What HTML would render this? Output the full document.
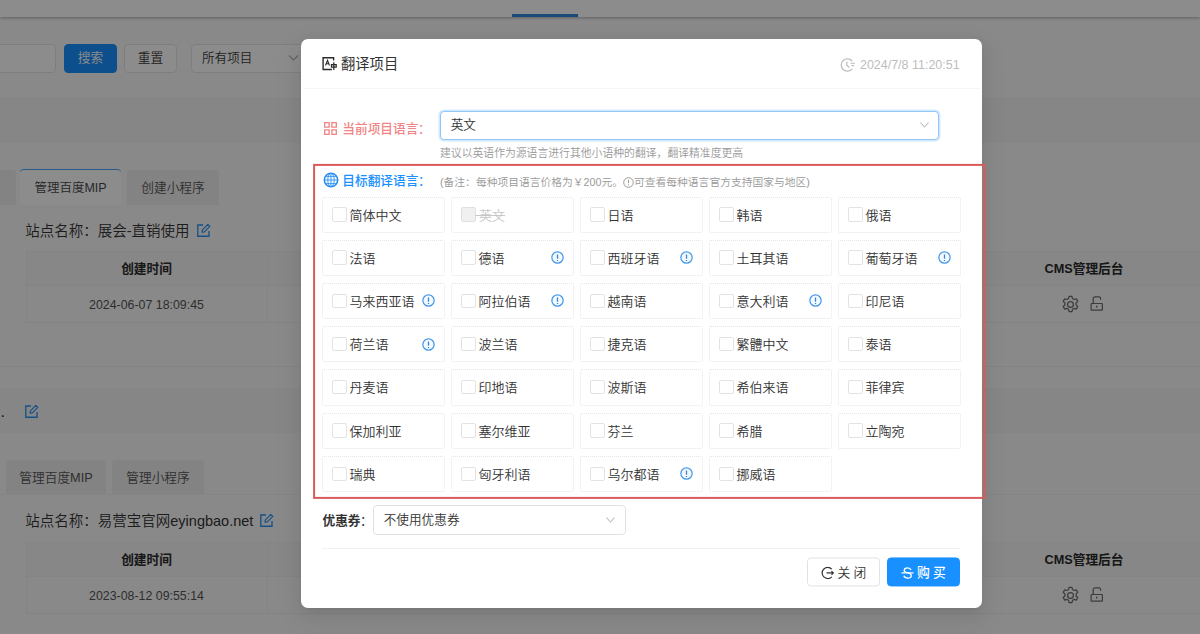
<!DOCTYPE html>
<html lang="zh-CN">
<head>
<meta charset="utf-8">
<title>翻译项目</title>
<style>
*{box-sizing:border-box;margin:0;padding:0}
html,body{width:1200px;height:634px;overflow:hidden}
body{position:relative;background:#fff;font-family:"Liberation Sans","Noto Sans CJK SC",sans-serif;font-size:13px;color:#333;line-height:1;font-weight:350}
.abs{position:absolute}
svg{display:block}
/* ---------- background page ---------- */
#page{position:absolute;z-index:0;left:0;top:0;width:1200px;height:634px;background:#fafafa;overflow:hidden}
.topbar{left:0;top:0;width:1200px;height:17px;background:#fff;box-shadow:0 1px 3px rgba(0,0,0,.3);z-index:2}
.topbar i{position:absolute;left:511.7px;top:14.300px;width:66.3px;height:2.900px;background:#3184dc}
.band{left:0;width:1200px;background:#f5f5f5}
.hline{left:0;width:1200px;height:1px;background:#efefef}
.inp{height:29px;border:1px solid #e6e6e6;border-radius:4px;background:#fff}
.btn{height:29px;border-radius:4px;border:1px solid #e6e6e6;background:#fff;text-align:center;line-height:27px;font-size:12.7px;color:#3a3a3a}
.btn.pri{background:#1890ff;border-color:#1890ff;color:#fff}
.tab{height:35px;border-radius:4px 4px 0 0;background:#eeeeee;text-align:center;line-height:37px;font-size:12.7px;color:#555}
.tab.on{background:#fff;border-top:1px solid #4aa3f5;line-height:36px;color:#484848;font-size:12.5px}
.site{font-size:14.5px;color:#333;white-space:nowrap;line-height:20px}
.th{height:35px;background:#f6f6f6;border-top:1px solid #f0f0f0;border-bottom:1px solid #f0f0f0}
.thc{font-weight:bold;font-size:12.7px;color:#2a2a2a;text-align:center;line-height:37px;white-space:nowrap}
.td{font-size:12.36px;color:#555;text-align:center;line-height:37px;white-space:nowrap}
.vline{width:1px;background:#f0f0f0}
#mask{position:absolute;left:0;top:0;width:1200px;height:634px;background:rgba(0,0,0,.45)}
/* ---------- modal ---------- */
#modal{position:absolute;left:301px;top:39px;width:681px;height:569px;background:#fff;border-radius:7px;box-shadow:0 3px 6px -4px rgba(0,0,0,.12),0 6px 16px 0 rgba(0,0,0,.08),0 9px 28px 8px rgba(0,0,0,.03)}
#redbox{pointer-events:none}
.title{left:40px;top:16.3px;font-size:14.3px;line-height:18px;color:#333;font-weight:400;white-space:nowrap}
.time{right:22.4px;top:19px;font-size:12.47px;line-height:14px;color:#bdbdbd;white-space:nowrap}
.mline{height:1px;background:#f0f0f0}
.lab{font-size:12.7px;line-height:16px;white-space:nowrap;font-weight:500}
.lab i{font-style:normal;margin-left:-0.5px;font-weight:400}
.hint{font-size:10.83px;line-height:14px;color:#999;white-space:nowrap}
.sel{border:1px solid #e2e2e2;border-radius:4px;background:#fff;font-size:12.65px;line-height:28px;padding-left:9.7px;color:#333;white-space:nowrap}
.sel.focus{border-color:#93c6f8;box-shadow:0 0 0 1.5px rgba(24,144,255,.2);line-height:27px}
.cell{position:absolute;width:122.3px;height:36.3px;border:1px dotted #e6e6e6;border-radius:2px}
.cell b{position:absolute;left:9px;top:9.5px;width:14.6px;height:14.6px;border:1px solid #e3e3e3;border-radius:2px;background:#fff}
.cell span{position:absolute;left:26px;top:9px;font-size:13px;line-height:17px;color:#333;white-space:nowrap}
.cell svg{position:absolute;right:9px;top:10.4px}
.cell.dis b{background:#f0f0f0;border-color:#e0e0e0}
.cell.dis span{color:#c8c8c8;text-decoration:line-through}
.mbtn{height:29px;transform:translateY(.45px);border:1px solid #e2e2e2;border-radius:4px;background:#fff;font-size:13px;color:#333}
.mbtn span{position:absolute;top:6.700px;font-size:12.8px;line-height:16px;letter-spacing:3.3px;white-space:nowrap}
.mbtn.pri{background:#1890ff;border-color:#1890ff;color:#fff}
.mbtn.pri span{font-weight:500}
</style>
</head>
<body>
<div id="page">
  <div class="abs topbar"><i></i></div>
  <!-- search row -->
  <div class="abs inp" style="left:-40px;top:44px;width:96px"></div>
  <div class="abs btn pri" style="left:64px;top:44px;width:53px">搜索</div>
  <div class="abs btn" style="left:124px;top:44px;width:53px">重置</div>
  <div class="abs inp" style="left:191px;top:44px;width:130px;line-height:27px;padding-left:10px;font-size:12.6px;color:#404040">所有项目
    <svg class="abs" style="left:95.500px;top:8.200px" width="11" height="10" viewBox="0 0 11 10"><path d="M1 2.5 L5.5 7 L10 2.5" fill="none" stroke="#b5b5b5" stroke-width="1.1"/></svg>
  </div>
  <div class="abs hline" style="top:98px"></div>
  <div class="abs band" style="top:99px;height:44px"></div>
  <!-- block 1 -->
  <div class="abs tab" style="left:-60px;top:170px;width:76px"></div>
  <div class="abs tab on" style="left:20px;top:169px;width:101px;height:36px">管理百度MIP</div>
  <div class="abs tab" style="left:127px;top:170px;width:92px">创建小程序</div>
  <div class="abs site" style="left:25.300px;top:221px">站点名称：展会-直销使用</div>
  <svg class="abs" style="left:196px;top:223px" width="15" height="15" viewBox="0 0 15 15"><path d="M13 8 V13.2 H1.8 V2 H7" fill="none" stroke="#2a93f7" stroke-width="1.35"/><path d="M6 9.2 L6.4 6.8 L11.8 1.4 L13.8 3.4 L8.4 8.8 Z" fill="none" stroke="#2a93f7" stroke-width="1.2" stroke-linejoin="round"/></svg>
  <div class="abs th" style="left:26px;top:251px;width:1180px"></div>
  <div class="abs thc" style="left:26px;top:251px;width:241px">创建时间</div>
  <div class="abs thc" style="left:984px;top:251px;width:200px">CMS管理后台</div>
  <div class="abs td" style="left:26px;top:287px;width:241px">2024-06-07 18:09:45</div>
  <div class="abs hline" style="left:26px;top:322px;width:1180px"></div>
  <div class="abs vline" style="left:26px;top:251px;height:72px"></div>
  <div class="abs vline" style="left:267px;top:251px;height:72px"></div>
  <svg class="abs gear" style="left:1060.900px;top:294.600px" width="19" height="19" viewBox="0 0 17 17"><g fill="none" stroke="#6c6c6c" stroke-width="1.1"><circle cx="8.5" cy="8.5" r="2.6"/><path d="M7.2 1.2h2.6l.5 2 1.4.8 2-.6 1.3 2.3-1.5 1.4v1.8l1.5 1.4-1.3 2.3-2-.6-1.4.8-.5 2H7.200l-.5-2-1.400-.8-2 .6-1.300-2.300 1.500-1.400V7.100L2 5.700l1.300-2.300 2 .6 1.400-.8z" stroke-linejoin="round"/></g></svg>
  <svg class="abs" style="left:1089px;top:295px" width="15" height="17" viewBox="0 0 15 17"><g fill="none" stroke="#6c6c6c" stroke-width="1.2"><rect x="2.100" y="8.500" width="11.300" height="6.600" rx=".7"/><path d="M4.200 8.500V3.600a1.700 1.700 0 0 1 1.700-1.700h4a1.700 1.700 0 0 1 1.700 1.700V4.700"/><path d="M7.700 10.800v1.800" stroke-width="1.400"/></g></svg>
  <div class="abs hline" style="top:366px"></div>
  <div class="abs band" style="top:388px;height:45px"></div>
  <div class="abs" style="left:.5px;top:401.500px;font-size:16px;line-height:20px;color:#333">.</div>
  <svg class="abs" style="left:24.300px;top:404px" width="15" height="15" viewBox="0 0 15 15"><path d="M13 8 V13.2 H1.8 V2 H7" fill="none" stroke="#2a93f7" stroke-width="1.35"/><path d="M6 9.2 L6.4 6.8 L11.8 1.4 L13.8 3.4 L8.4 8.8 Z" fill="none" stroke="#2a93f7" stroke-width="1.2" stroke-linejoin="round"/></svg>
  <!-- block 2 -->
  <div class="abs tab" style="left:-80px;top:460px;width:80px"></div>
  <div class="abs tab" style="left:6px;top:460px;width:100px">管理百度MIP</div>
  <div class="abs tab" style="left:112px;top:460px;width:92px">管理小程序</div>
  <div class="abs hline" style="top:494px;background:#f3f3f3"></div>
  <div class="abs site" style="left:25.300px;top:511px">站点名称：易营宝官网eyingbao.net</div>
  <svg class="abs" style="left:259px;top:513px" width="15" height="15" viewBox="0 0 15 15"><path d="M13 8 V13.2 H1.8 V2 H7" fill="none" stroke="#2a93f7" stroke-width="1.35"/><path d="M6 9.2 L6.4 6.8 L11.8 1.4 L13.8 3.4 L8.4 8.8 Z" fill="none" stroke="#2a93f7" stroke-width="1.2" stroke-linejoin="round"/></svg>
  <div class="abs th" style="left:26px;top:542px;width:1180px"></div>
  <div class="abs thc" style="left:26px;top:542px;width:241px">创建时间</div>
  <div class="abs thc" style="left:984px;top:542px;width:200px">CMS管理后台</div>
  <div class="abs td" style="left:26px;top:578px;width:241px">2023-08-12 09:55:14</div>
  <div class="abs hline" style="left:26px;top:613px;width:1180px"></div>
  <div class="abs vline" style="left:26px;top:542px;height:72px"></div>
  <div class="abs vline" style="left:267px;top:542px;height:72px"></div>
  <svg class="abs gear" style="left:1060.900px;top:585.600px" width="19" height="19" viewBox="0 0 17 17"><g fill="none" stroke="#6c6c6c" stroke-width="1.1"><circle cx="8.5" cy="8.5" r="2.6"/><path d="M7.2 1.2h2.6l.5 2 1.4.8 2-.6 1.3 2.3-1.5 1.4v1.8l1.5 1.4-1.3 2.3-2-.6-1.4.8-.5 2H7.200l-.5-2-1.400-.8-2 .6-1.300-2.300 1.500-1.400V7.100L2 5.700l1.300-2.300 2 .6 1.400-.8z" stroke-linejoin="round"/></g></svg>
  <svg class="abs" style="left:1089px;top:586px" width="15" height="17" viewBox="0 0 15 17"><g fill="none" stroke="#6c6c6c" stroke-width="1.2"><rect x="2.100" y="8.500" width="11.300" height="6.600" rx=".7"/><path d="M4.200 8.500V3.600a1.700 1.700 0 0 1 1.700-1.700h4a1.700 1.700 0 0 1 1.700 1.700V4.700"/><path d="M7.700 10.800v1.800" stroke-width="1.400"/></g></svg>
</div>
<div id="mask"></div>
<div id="modal">
  <svg class="abs" style="left:21px;top:17px" width="17" height="16" viewBox="0 0 17 16"><path d="M11.600 4.500V1.800H1.100V13.500H9.900" fill="none" stroke="#2b2b2b" stroke-width="1.400"/><path d="M3.500 9.500 5.500 4.200 7.500 9.500M4.300 7.700h2.400" fill="none" stroke="#2b2b2b" stroke-width="1.100"/><path d="M9.500 8.700h4.700v2.500H9.500zM11.800 6.200v7.900" fill="none" stroke="#2b2b2b" stroke-width="1.250"/></svg>
  <div class="abs title">翻译项目</div>
  <div class="abs time">2024/7/8 11:20:51</div>
  <svg class="abs" style="left:539.400px;top:18.700px" width="16" height="14" viewBox="0 0 16 14"><path d="M12.300 3.200A6.200 6.200 0 1 0 12.300 10.800" fill="none" stroke="#bdbdbd" stroke-width="1.200"/><path d="M6.800 3.500V7.300L9.300 9.500" fill="none" stroke="#bdbdbd" stroke-width="1.200"/><path d="M10.500 5.300H15M11.500 7.600H14" fill="none" stroke="#bdbdbd" stroke-width="1.100"/></svg>
  <div class="abs mline" style="left:3px;top:49px;width:676px;background:#f5f5f5"></div>
  <svg class="abs" style="left:23px;top:83px" width="13" height="13" viewBox="0 0 13 13"><path d="M.700.700h4.400v4.400H.700zM7.900.700h4.400v4.400H7.900zM.700 7.900h4.400v4.400H.700zM7.900 7.900h4.400v4.400H7.900z" fill="none" stroke="#f18484" stroke-width="1.300"/></svg>
  <div class="abs lab" style="left:41.3px;top:82px;color:#f18484">当前项目语言<i>：</i></div>
  <div class="abs sel focus" style="left:139px;top:72px;width:499px;height:28.500px">英文
    <svg class="abs" style="left:478px;top:8px" width="11" height="10" viewBox="0 0 11 10"><path d="M1.400 2.500 5.500 7 9.600 2.500" fill="none" stroke="#bdbdbd" stroke-width="1.100"/></svg>
  </div>
  <div class="abs hint" style="left:139px;top:107px">建议以英语作为源语言进行其他小语种的翻译，翻译精准度更高</div>
  <svg class="abs" style="left:21.500px;top:132.500px" width="16" height="16" viewBox="0 0 16 16"><g fill="none" stroke="#2a8ff0"><circle cx="8" cy="8" r="6.700" stroke-width="1.550" fill="#f2faff"/><ellipse cx="8" cy="8" rx="3.200" ry="6.700" stroke-width=".850"/><path d="M8 1.300v13.400M1.300 8h13.400M2.400 4.400h11.200M2.400 11.600h11.200" stroke-width=".850"/></g></svg>
  <div class="abs lab" style="left:41.3px;top:134px;color:#1890ff">目标翻译语言<i>：</i></div>
  <div class="abs hint" style="left:139px;top:135.600px;font-size:10.77px">(备注：每种项目语言价格为￥200元。<svg style="display:inline-block;vertical-align:-2px" width="11" height="11" viewBox="0 0 11 11"><g fill="none" stroke="#999" stroke-width="1"><circle cx="5.500" cy="5.500" r="4.800"/><path d="M5.500 2.800v3.400M5.500 7.400v1"/></g></svg>可查看每种语言官方支持国家与地区)</div>
  <div class="cell" style="left:21.4px;top:157.6px"><b></b><span>简体中文</span></div>
  <div class="cell dis" style="left:150.4px;top:157.6px"><b></b><span style="left:23px">&nbsp;英文</span></div>
  <div class="cell" style="left:279.4px;top:157.6px"><b></b><span>日语</span></div>
  <div class="cell" style="left:408.4px;top:157.6px"><b></b><span>韩语</span></div>
  <div class="cell" style="left:537.4px;top:157.6px"><b></b><span>俄语</span></div>
  <div class="cell" style="left:21.4px;top:200.8px"><b></b><span>法语</span></div>
  <div class="cell" style="left:150.4px;top:200.8px"><b></b><span>德语</span><svg width="13" height="13" viewBox="0 0 13 13"><g fill="none" stroke="#4698ea" stroke-width="1.250"><circle cx="6.500" cy="6.500" r="5.650" fill="#f4fbff"/><path d="M6.500 3.400v4.300M6.500 8.900v1.200" stroke="#3c82cf" stroke-width="1.300"/></g></svg></div>
  <div class="cell" style="left:279.4px;top:200.8px"><b></b><span>西班牙语</span><svg width="13" height="13" viewBox="0 0 13 13"><g fill="none" stroke="#4698ea" stroke-width="1.250"><circle cx="6.500" cy="6.500" r="5.650" fill="#f4fbff"/><path d="M6.500 3.400v4.300M6.500 8.900v1.200" stroke="#3c82cf" stroke-width="1.300"/></g></svg></div>
  <div class="cell" style="left:408.4px;top:200.8px"><b></b><span>土耳其语</span></div>
  <div class="cell" style="left:537.4px;top:200.8px"><b></b><span>葡萄牙语</span><svg width="13" height="13" viewBox="0 0 13 13"><g fill="none" stroke="#4698ea" stroke-width="1.250"><circle cx="6.500" cy="6.500" r="5.650" fill="#f4fbff"/><path d="M6.500 3.400v4.300M6.500 8.900v1.200" stroke="#3c82cf" stroke-width="1.300"/></g></svg></div>
  <div class="cell" style="left:21.4px;top:244.0px"><b></b><span>马来西亚语</span><svg width="13" height="13" viewBox="0 0 13 13"><g fill="none" stroke="#4698ea" stroke-width="1.250"><circle cx="6.500" cy="6.500" r="5.650" fill="#f4fbff"/><path d="M6.500 3.400v4.300M6.500 8.900v1.200" stroke="#3c82cf" stroke-width="1.300"/></g></svg></div>
  <div class="cell" style="left:150.4px;top:244.0px"><b></b><span>阿拉伯语</span><svg width="13" height="13" viewBox="0 0 13 13"><g fill="none" stroke="#4698ea" stroke-width="1.250"><circle cx="6.500" cy="6.500" r="5.650" fill="#f4fbff"/><path d="M6.500 3.400v4.300M6.500 8.900v1.200" stroke="#3c82cf" stroke-width="1.300"/></g></svg></div>
  <div class="cell" style="left:279.4px;top:244.0px"><b></b><span>越南语</span></div>
  <div class="cell" style="left:408.4px;top:244.0px"><b></b><span>意大利语</span><svg width="13" height="13" viewBox="0 0 13 13"><g fill="none" stroke="#4698ea" stroke-width="1.250"><circle cx="6.500" cy="6.500" r="5.650" fill="#f4fbff"/><path d="M6.500 3.400v4.300M6.500 8.900v1.200" stroke="#3c82cf" stroke-width="1.300"/></g></svg></div>
  <div class="cell" style="left:537.4px;top:244.0px"><b></b><span>印尼语</span></div>
  <div class="cell" style="left:21.4px;top:287.2px"><b></b><span>荷兰语</span><svg width="13" height="13" viewBox="0 0 13 13"><g fill="none" stroke="#4698ea" stroke-width="1.250"><circle cx="6.500" cy="6.500" r="5.650" fill="#f4fbff"/><path d="M6.500 3.400v4.300M6.500 8.900v1.200" stroke="#3c82cf" stroke-width="1.300"/></g></svg></div>
  <div class="cell" style="left:150.4px;top:287.2px"><b></b><span>波兰语</span></div>
  <div class="cell" style="left:279.4px;top:287.2px"><b></b><span>捷克语</span></div>
  <div class="cell" style="left:408.4px;top:287.2px"><b></b><span>繁體中文</span></div>
  <div class="cell" style="left:537.4px;top:287.2px"><b></b><span>泰语</span></div>
  <div class="cell" style="left:21.4px;top:330.4px"><b></b><span>丹麦语</span></div>
  <div class="cell" style="left:150.4px;top:330.4px"><b></b><span>印地语</span></div>
  <div class="cell" style="left:279.4px;top:330.4px"><b></b><span>波斯语</span></div>
  <div class="cell" style="left:408.4px;top:330.4px"><b></b><span>希伯来语</span></div>
  <div class="cell" style="left:537.4px;top:330.4px"><b></b><span>菲律宾</span></div>
  <div class="cell" style="left:21.4px;top:373.8px"><b></b><span>保加利亚</span></div>
  <div class="cell" style="left:150.4px;top:373.8px"><b></b><span>塞尔维亚</span></div>
  <div class="cell" style="left:279.4px;top:373.8px"><b></b><span>芬兰</span></div>
  <div class="cell" style="left:408.4px;top:373.8px"><b></b><span>希腊</span></div>
  <div class="cell" style="left:537.4px;top:373.8px"><b></b><span>立陶宛</span></div>
  <div class="cell" style="left:21.4px;top:417.0px"><b></b><span>瑞典</span></div>
  <div class="cell" style="left:150.4px;top:417.0px"><b></b><span>匈牙利语</span></div>
  <div class="cell" style="left:279.4px;top:417.0px"><b></b><span>乌尔都语</span><svg width="13" height="13" viewBox="0 0 13 13"><g fill="none" stroke="#4698ea" stroke-width="1.250"><circle cx="6.500" cy="6.500" r="5.650" fill="#f4fbff"/><path d="M6.500 3.400v4.300M6.500 8.900v1.200" stroke="#3c82cf" stroke-width="1.300"/></g></svg></div>
  <div class="cell" style="left:408.4px;top:417.0px"><b></b><span>挪威语</span></div>
  <div class="abs lab" style="left:21.500px;top:474px;font-weight:bold;color:#333">优惠券<i>：</i></div>
  <div class="abs sel" style="left:72px;top:466px;width:253px;height:30px">不使用优惠券
    <svg class="abs" style="left:231px;top:9px" width="11" height="10" viewBox="0 0 11 10"><path d="M1.400 2.500 5.500 7 9.600 2.500" fill="none" stroke="#bdbdbd" stroke-width="1.100"/></svg>
  </div>
  <div class="abs mline" style="left:21px;top:509px;width:638px"></div>
  <div class="abs mbtn" style="left:506px;top:518px;width:73px">
    <svg class="abs" style="left:13px;top:7.500px" width="13" height="13" viewBox="0 0 13 13"><path d="M10.800 2.600A5.600 5.600 0 1 0 10.800 10.400" fill="none" stroke="#333" stroke-width="1.200"/><path d="M5.500 6.500h6.800M10.500 4.700l1.800 1.800-1.800 1.800" fill="none" stroke="#333" stroke-width="1.200"/></svg>
    <span style="left:29.500px">关闭</span></div>
  <div class="abs mbtn pri" style="left:586px;top:518px;width:73.3px">
    <svg class="abs" style="left:13px;top:8px" width="13" height="13" viewBox="0 0 13 13"><path d="M10 3.600C9.500 2.200 8.300 1.500 6.600 1.500 4.500 1.500 3.200 2.500 3.200 4 3.200 7.500 10.300 5.500 10.300 9.200 10.300 10.700 8.800 11.600 6.700 11.600 4.700 11.600 3.300 10.800 2.900 9.300" fill="none" stroke="#fff" stroke-width="1.300"/><path d="M.500 6.500h12" stroke="#fff" stroke-width="1.200"/></svg>
    <span style="left:29px">购买</span></div>
</div>
<svg id="redbox" class="abs" style="left:0;top:0" width="1200" height="634" viewBox="0 0 1200 634"><rect x="314.1" y="164.9" width="670.2" height="333" fill="none" stroke="#da5a5a" stroke-width="2"/></svg>
</body>
</html>
